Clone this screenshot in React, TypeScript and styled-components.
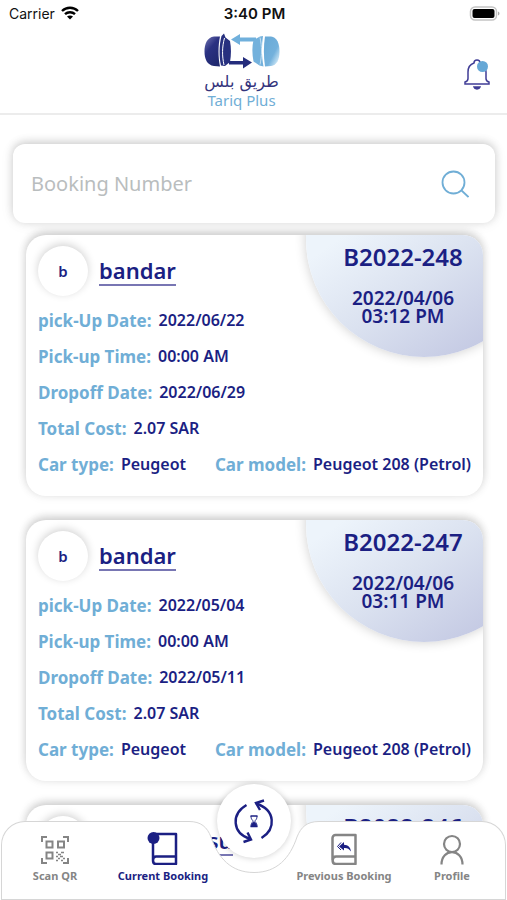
import React from "react";
import styled, { createGlobalStyle } from "styled-components";

const navy = "#1b1f83";
const sky = "#70aed6";
const grey = "#858585";

const GlobalStyle = createGlobalStyle`
  *, *::before, *::after { box-sizing: border-box; }
  body {
    margin: 0;
    background: #fff;
    color: ${navy};
    font-family: "Noto Sans", "Open Sans", sans-serif;
  }
  button, input { font: inherit; color: inherit; }
  button { border: 0; padding: 0; background: none; cursor: pointer; }
  h1, h2, p, ul, dl, dd { margin: 0; padding: 0; }
  ul { list-style: none; }
`;

const Screen = styled.div`
  position: relative;
  display: flex;
  flex-direction: column;
  height: 100vh;
  overflow: hidden;
  background: #fff;
`;

const StatusBar = styled.div`
  display: grid;
  grid-template-columns: 1fr auto 1fr;
  align-items: center;
  height: 26px;
  padding: 0 7px 0 9px;
  font-family: Inter, sans-serif;
  font-size: 14px;
  color: #111;
`;

const Carrier = styled.span`
  display: flex;
  align-items: center;
  gap: 6px;
`;

const Clock = styled.time`
  font-size: 15px;
  font-weight: 600;
`;

const BatterySlot = styled.span`
  display: flex;
  justify-content: flex-end;
`;

const Header = styled.header`
  display: grid;
  grid-template-columns: 1fr auto 1fr;
  align-items: center;
  height: 89px;
  padding: 0 17px;
  border-bottom: 2px solid #ececec;
`;

const Brand = styled.div`
  grid-column: 2;
  display: flex;
  flex-direction: column;
  align-items: center;
  margin-left: -24px;
`;

const BrandArabic = styled.p`
  font-family: "DejaVu Sans", sans-serif;
  font-size: 16px;
  line-height: 20px;
  color: #34347c;
`;

const BrandLatin = styled.p`
  font-size: 15px;
  line-height: 16px;
  color: ${sky};
`;

const BellButton = styled.button`
  display: flex;
  justify-self: end;
  margin-top: 10px;
`;

const Main = styled.main`
  flex: 1;
  min-height: 0;
  padding-top: 29px;
  overflow-y: auto;
  scrollbar-width: none;
`;

const SearchForm = styled.form`
  display: flex;
  align-items: center;
  height: 79px;
  margin: 0 12px 12px 13px;
  padding: 0 26px 0 18px;
  border-radius: 12px;
  background: #fff;
  box-shadow: 0 -2px 8px rgba(0, 0, 0, 0.16), 0 0 14px rgba(0, 0, 0, 0.08);
`;

const SearchInput = styled.input`
  flex: 1;
  min-width: 0;
  padding: 0;
  border: 0;
  outline: 0;
  background: none;
  font-size: 20px;
  &::placeholder {
    color: #b9bdbe;
    opacity: 1;
  }
`;

const SearchButton = styled.button`
  display: flex;
`;

const BookingList = styled.ul`
  display: flex;
  flex-direction: column;
  gap: 24px;
  padding: 0 24px 110px 26px;
`;

const Card = styled.li`
  position: relative;
  height: 261px;
  border-radius: 20px;
  background: #fff;
  box-shadow: 0 -3px 9px rgba(0, 0, 0, 0.18), 0 0 12px rgba(0, 0, 0, 0.06);
`;

const CardBody = styled.article`
  position: relative;
  height: 100%;
  padding: 11px 12px;
  border-radius: 20px;
  overflow: hidden;
`;

const Disc = styled.div`
  position: absolute;
  top: -114px;
  right: -59px;
  width: 236px;
  height: 236px;
  border-radius: 50%;
  background: linear-gradient(145deg, #edf4fb 35%, #dbe2f0 60%, #c2c7e2 90%);
  box-shadow: 0 0 12px rgba(0, 0, 0, 0.2);
`;

const Reference = styled.div`
  position: absolute;
  top: 8px;
  right: 0;
  width: 160px;
  text-align: center;
`;

const BookingNumber = styled.h2`
  font-size: 24px;
  line-height: 28px;
  font-weight: 600;
`;

const Created = styled.p`
  margin-top: 18px;
  font-size: 19px;
  line-height: 18px;
  font-weight: 600;
`;

const Customer = styled.div`
  display: flex;
  align-items: center;
  gap: 11px;
  height: 50px;
  margin-bottom: 6px;
`;

const Avatar = styled.span`
  display: flex;
  flex: none;
  align-items: center;
  justify-content: center;
  width: 50px;
  height: 50px;
  border-radius: 50%;
  background: #fff;
  font-size: 15px;
  font-weight: 600;
  box-shadow: 0 -2px 8px rgba(0, 0, 0, 0.18);
`;

const CustomerName = styled.a`
  border-bottom: 2px solid #7876b3;
  font-size: 22px;
  line-height: 28px;
  font-weight: 600;
  color: inherit;
  text-decoration: none;
`;

const Details = styled.dl`
  display: flex;
  flex-direction: column;
`;

const DetailLine = styled.div`
  display: flex;
  justify-content: space-between;
  height: 36px;
`;

const Pair = styled.div`
  display: flex;
  align-items: center;
  gap: 7px;
  white-space: nowrap;
`;

const Label = styled.dt`
  font-size: 17px;
  font-weight: 700;
  color: ${sky};
`;

const Value = styled.dd`
  font-size: 16px;
  font-weight: 600;
`;

const Nav = styled.nav`
  position: absolute;
  right: 1px;
  bottom: 0;
  left: 1px;
  height: 79px;
`;

const NavBackdrop = styled.div`
  position: absolute;
  inset: 0;
  display: flex;
`;

const NavSide = styled.div<{ $side: "left" | "right" }>`
  flex: 1;
  border: 1px solid #d6d6d6;
  background: #fff;
  ${({ $side }) =>
    $side === "left"
      ? "border-right: 0; border-radius: 24px 0 0 0;"
      : "border-left: 0; border-radius: 0 24px 0 0;"}
`;

const NavItems = styled.ul`
  position: relative;
  display: grid;
  grid-template-columns: 1fr 1fr 73px 1fr 1fr;
`;

const NavLink = styled.a<{ $active?: boolean }>`
  display: flex;
  flex-direction: column;
  align-items: center;
  gap: 3px;
  padding-top: 10px;
  font-size: 11px;
  line-height: 16px;
  font-weight: 700;
  white-space: nowrap;
  text-decoration: none;
  color: ${({ $active }) => ($active ? navy : grey)};
`;

const CenterSlot = styled.li`
  display: flex;
  justify-content: center;
  margin-top: -37px;
`;

const CenterButton = styled.button`
  display: flex;
  flex: none;
  align-items: center;
  justify-content: center;
  width: 74px;
  height: 74px;
  border-radius: 50%;
  background: #fff;
  box-shadow: 0 0 6px rgba(0, 0, 0, 0.2);
`;

const WifiIcon = () => (
  <svg width="18" height="14" viewBox="0 0 18 14" fill="none" stroke="#000" strokeWidth="2.4" aria-hidden="true">
    <path d="M1 5C5.5.6 12.500.6 17 5" />
    <path d="M4 8.200c2.800-2.700 7.200-2.700 10 0" />
    <path d="M9 13.500 6 10.600c1.700-1.600 4.300-1.600 6 0z" fill="#000" stroke="none" />
  </svg>
);

const BatteryIcon = () => (
  <svg width="31" height="15" viewBox="0 0 31 15" aria-hidden="true">
    <rect x="1.500" y="1" width="26" height="13" rx="4.500" fill="#fff" stroke="#c4c4c4" strokeWidth="1.500" />
    <rect x="3.500" y="3" width="22" height="9" rx="2" fill="#000" />
    <path d="M29 5.500c2 .8 2 3.200 0 4z" fill="#aaa" />
  </svg>
);

const Logo = () => (
  <svg width="76" height="40" viewBox="0 0 76 40" aria-hidden="true">
    <defs>
      <linearGradient id="hood" x1="0" y1="0" x2="0.6" y2="1">
        <stop offset="0" stopColor="#7678b5" />
        <stop offset="0.45" stopColor="#2b3282" />
        <stop offset="1" stopColor="#202970" />
      </linearGradient>
      <linearGradient id="trunk" x1="0" y1="0" x2="1" y2="1">
        <stop offset="0" stopColor="#68a9d6" />
        <stop offset="0.6" stopColor="#73b1dc" />
        <stop offset="0.85" stopColor="#c3e1f3" />
        <stop offset="1" stopColor="#5d9fce" />
      </linearGradient>
    </defs>
    <path d="M16 4.500H10C3 5.500.5 12 .5 19.500S3 33 10 34l6 .5c-2-9-2-21 0-30z" fill="url(#hood)" />
    <path d="M17.500 4 20 1.500l1.500 4 4.500 3.500c1.300 7 1.300 14 0 21L21 34l-4-.5c-2-9-2-20 .5-29.500z" fill="#27307f" />
    <path d="M20.500 6c-2.500 9-2.500 18-.5 27" stroke="#fff" strokeWidth="1" fill="none" />
    <path d="M27 7.500 36 2v3.500h16v4H36V13z" fill="#70b0dc" />
    <path d="M48 30.500 39 25v4H25v3.500h14v4z" fill="#242c7c" />
    <path d="M49.500 8 56 4.500l3-.5c-1.500 10-1.500 20 .5 30.500l-4-1-6-4c-1.500-8-1.500-15 0-21.500z" fill="#73b1dc" />
    <path d="M56 5.500c2 9 2 18 0 27" stroke="#c5e1f3" fill="none" />
    <path d="M61 4.500h6c6 .7 8.500 7 8.500 15S73 33 67 34l-6 .5C59.500 24 59.500 14 61 4.500z" fill="url(#trunk)" />
  </svg>
);

const BellIcon = () => (
  <svg width="26" height="31" viewBox="0 0 26 31" fill="none" stroke="#403d96" strokeWidth="1.500" aria-hidden="true">
    <path d="M10 4c0-4 6-4 6 0 4.500 1.300 6 5 6 9v6.500c0 2 1 3 3 3.500v2H1v-2c2-.5 3-1.500 3-3.500V13c0-4.500 2-7.700 6-9z" />
    <path d="M10 28h6c-.8 2.500-5.200 2.500-6 0z" fill="#403d96" />
    <circle cx="18.500" cy="7.500" r="5.500" fill="#66a8d6" stroke="none" />
  </svg>
);

const SearchIcon = () => (
  <svg width="28" height="28" viewBox="0 0 28 28" fill="none" stroke={sky} strokeWidth="1.800" aria-hidden="true">
    <circle cx="12.500" cy="12.500" r="11" />
    <path d="m20 20 7.500 7" />
  </svg>
);

const QrIcon = () => (
  <svg width="30" height="34" viewBox="0 0 30 34" fill="none" stroke={grey} strokeWidth="2" aria-hidden="true">
    <path d="M2 11V6h5M23 6h5v5M28 27v5h-5M7 32H2v-5" />
    <path d="M6.500 10.500h6v6h-6zM18 10.500h6v6h-6zM6.500 21.500h6v6h-6z" />
    <path d="M16 21.500h2m3 0h3M18 23.500h3M16 25.500h2m2 0h3M18 27.500h2m3 0h2M16 29.500h2m3 0h2" strokeWidth="1.500" />
  </svg>
);

const CurrentIcon = () => (
  <svg width="32" height="34" viewBox="0 0 32 34" fill="none" stroke={navy} strokeWidth="2.500" aria-hidden="true">
    <path d="M6 29V5a2 2 0 0 1 2-2h21v30H9c-4 0-4-7.500 0-7.500h20" strokeLinejoin="round" />
    <circle cx="6.500" cy="7" r="6" fill={navy} stroke="none" />
  </svg>
);

const PreviousIcon = () => (
  <svg width="26" height="34" viewBox="0 0 26 34" fill="none" stroke={grey} strokeWidth="2.500" aria-hidden="true">
    <path d="M1.500 29V7a3 3 0 0 1 3-3h20v29H5c-4.500 0-4.500-7.500 0-7.500h19.500" strokeLinejoin="round" />
    <path d="m13 11-5 4.500 5 4V17c3-.3 5 .8 7 3.500-.6-4.500-3-6.500-7-6.700z" fill={navy} stroke="none" />
    <path d="m10 11.500-3.500 4 3.500 3.500" stroke={navy} strokeWidth="1" />
  </svg>
);

const ProfileIcon = () => (
  <svg width="26" height="34" viewBox="0 0 26 34" fill="none" stroke={grey} strokeWidth="2.200" aria-hidden="true">
    <circle cx="13" cy="13" r="8" />
    <path d="M2.500 33.500c0-16.500 21-16.500 21 0" />
  </svg>
);

const RenewIcon = () => (
  <svg width="42" height="46" viewBox="0 0 42 46" fill="none" stroke={navy} strokeWidth="2.400" aria-hidden="true">
    <path d="M13.500 7C-2 16-1 35 17 41" />
    <path d="m10.500 44 7.500-2.500-3.500-7" />
    <path d="M28.500 40C43 31 43 12 23 5.500" />
    <path d="m31 2.500-8 2.500 4 7" />
    <path d="M17.500 18h7M17.500 28.500h7" strokeWidth="1.500" />
    <path d="M18 18c0 4 2 4 2 5.200s-2 1.200-2 5.300h6c0-4.100-2-4.100-2-5.300s2-1.200 2-5.200" strokeWidth="1" />
    <path d="M18 28.500c0-3 1.500-3.500 3-5 1.500 1.500 3 2 3 5z" fill={navy} stroke="none" />
  </svg>
);

const NavNotch = () => (
  <svg width="130" height="79" viewBox="0 0 130 79" aria-hidden="true">
    <path d="M0 .5C12 .5 18 6 22 16 29 37 42 51.500 65 51.500S101 37 108 16C112 6 118 .5 130 .5V79H0z" fill="#fff" />
    <path d="M0 .5C12 .5 18 6 22 16 29 37 42 51.500 65 51.500S101 37 108 16C112 6 118 .5 130 .5M0 78.500h130" fill="none" stroke="#d6d6d6" />
  </svg>
);

type Booking = {
  number: string;
  customer: string;
  date: string;
  time: string;
  pickUp: string;
  dropoff: string;
};

const bookings: Booking[] = [
  { number: "B2022-248", customer: "bandar", date: "2022/04/06", time: "03:12 PM", pickUp: "2022/06/22", dropoff: "2022/06/29" },
  { number: "B2022-247", customer: "bandar", date: "2022/04/06", time: "03:11 PM", pickUp: "2022/05/04", dropoff: "2022/05/11" },
  { number: "B2022-246", customer: "bandar al-su", date: "2022/04/06", time: "03:10 PM", pickUp: "2022/05/04", dropoff: "2022/05/11" },
];

const Detail = ({ label, value }: { label: string; value: string }) => (
  <Pair>
    <Label>{label}</Label>
    <Value>{value}</Value>
  </Pair>
);

const BookingCard = ({ booking }: { booking: Booking }) => (
  <Card>
    <CardBody>
      <Disc />
      <Reference>
        <BookingNumber>{booking.number}</BookingNumber>
        <Created>
          {booking.date}
          <br />
          {booking.time}
        </Created>
      </Reference>
      <Customer>
        <Avatar>{booking.customer[0]}</Avatar>
        <CustomerName href="#customer">{booking.customer}</CustomerName>
      </Customer>
      <Details>
        <DetailLine><Detail label="pick-Up Date:" value={booking.pickUp} /></DetailLine>
        <DetailLine><Detail label="Pick-up Time:" value="00:00 AM" /></DetailLine>
        <DetailLine><Detail label="Dropoff Date:" value={booking.dropoff} /></DetailLine>
        <DetailLine><Detail label="Total Cost:" value="2.07 SAR" /></DetailLine>
        <DetailLine>
          <Detail label="Car type:" value="Peugeot" />
          <Detail label="Car model:" value="Peugeot 208 (Petrol)" />
        </DetailLine>
      </Details>
    </CardBody>
  </Card>
);

export default function App() {
  return (
    <>
      <GlobalStyle />
      <Screen>
        <StatusBar>
          <Carrier>Carrier <WifiIcon /></Carrier>
          <Clock>3:40 PM</Clock>
          <BatterySlot><BatteryIcon /></BatterySlot>
        </StatusBar>
        <Header>
          <Brand>
            <Logo />
            <BrandArabic lang="ar" dir="rtl">طريق بلس</BrandArabic>
            <BrandLatin>Tariq Plus</BrandLatin>
          </Brand>
          <BellButton type="button" aria-label="Notifications"><BellIcon /></BellButton>
        </Header>
        <Main>
          <SearchForm role="search" onSubmit={(event) => event.preventDefault()}>
            <SearchInput type="text" aria-label="Booking Number" placeholder="Booking Number" />
            <SearchButton type="submit" aria-label="Search"><SearchIcon /></SearchButton>
          </SearchForm>
          <BookingList>
            {bookings.map((booking) => (
              <BookingCard key={booking.number} booking={booking} />
            ))}
          </BookingList>
        </Main>
        <Nav aria-label="Main">
          <NavBackdrop>
            <NavSide $side="left" />
            <NavNotch />
            <NavSide $side="right" />
          </NavBackdrop>
          <NavItems>
            <li><NavLink href="#scan"><QrIcon />Scan QR</NavLink></li>
            <li><NavLink href="#current" $active aria-current="page"><CurrentIcon />Current Booking</NavLink></li>
            <CenterSlot><CenterButton type="button" aria-label="Renew booking"><RenewIcon /></CenterButton></CenterSlot>
            <li><NavLink href="#previous"><PreviousIcon />Previous Booking</NavLink></li>
            <li><NavLink href="#profile"><ProfileIcon />Profile</NavLink></li>
          </NavItems>
        </Nav>
      </Screen>
    </>
  );
}
